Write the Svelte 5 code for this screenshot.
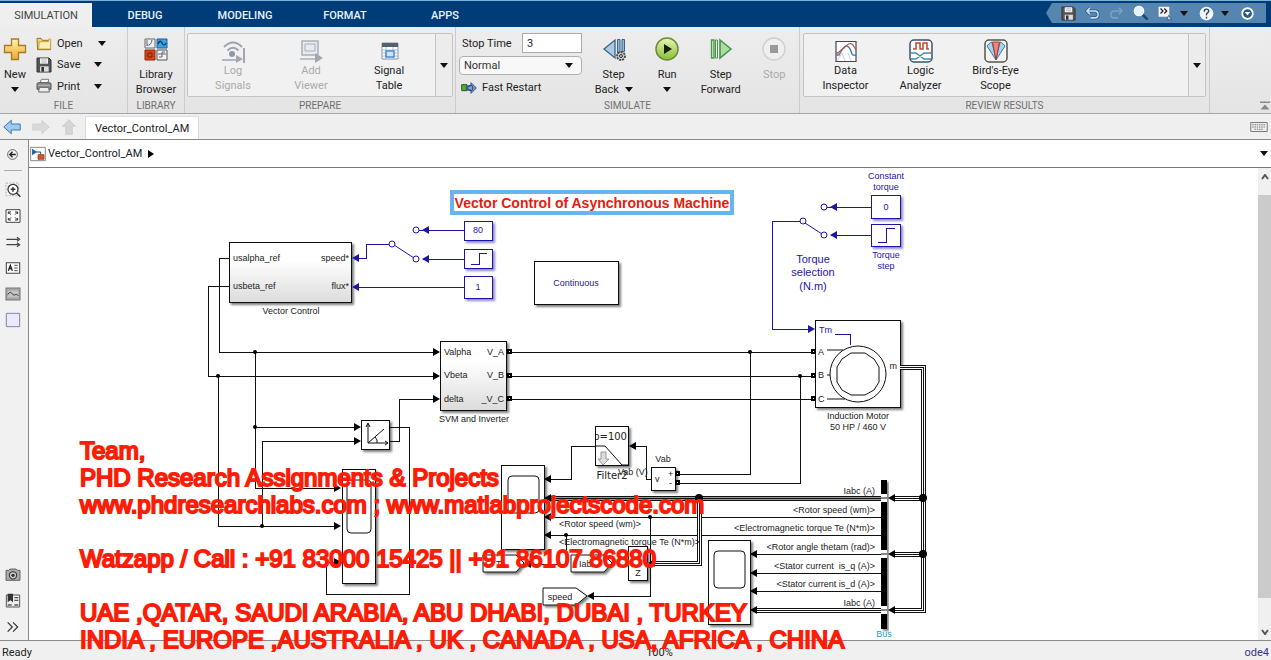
<script>
  const tabs = ['SIMULATION', 'DEBUG', 'MODELING', 'FORMAT', 'APPS'];
  let active = $state('SIMULATION');

  const fileActions = [
    { icon: 'open', label: 'Open' },
    { icon: 'save', label: 'Save' },
    { icon: 'print', label: 'Print' }
  ];
  const prepare = [
    { icon: 'log', lines: ['Log', 'Signals'], off: true },
    { icon: 'viewer', lines: ['Add', 'Viewer'], off: true },
    { icon: 'table', lines: ['Signal', 'Table'] }
  ];
  const review = [
    { icon: 'inspector', lines: ['Data', 'Inspector'] },
    { icon: 'logic', lines: ['Logic', 'Analyzer'] },
    { icon: 'scope', lines: ["Bird's-Eye", 'Scope'] }
  ];
  const paletteTop = ['zoom', 'fit', 'arrows', 'note', 'image', 'area'];
  const paletteBottom = ['camera', 'book', 'more'];

  const wires = [
    'M229 258H219V352H434', 'M229 286H208V376H434',
    'M255 352V488H336', 'M255 427H356', 'M262 526V441H356', 'M218 376V526H336',
    'M390 427H409V594H326V562H336', 'M390 441H399V399H434',
    'M511 352H811', 'M511 376H811', 'M511 399H811',
    'M750 352V474H679', 'M800 376V483H679',
    'M595 446H571V479H551', 'M651 479H646V446H635',
    'M881 517H551', 'M881 535H551', 'M650 517V596H594', 'M566 535V564H530',
    'M881 554H757', 'M881 573H757', 'M881 591H757'
  ];
  const blueWires = [
    'M464 230H423', 'M464 259H423', 'M464 287H359', 'M389 244H366V258H359',
    'M871 207H831', 'M871 235H831', 'M800 221H772V329H809', 'M419 230H423', 'M827 207H831'
  ];
  const buses = ['M900 367H923V610H895', 'M923 498H895', 'M923 554H895', 'M881 498H551', 'M699 498V563H653', 'M881 610H757'];
  const dots = [
    [255, 352, 2], [218, 376, 2], [255, 427, 2], [262, 526, 2], [750, 352, 2], [800, 376, 2],
    [650, 517, 2], [566, 535, 2], [923, 498, 4], [923, 554, 4], [699, 498, 4]
  ];
  const heads = [
    [440, 352, 1], [440, 376, 1], [440, 399, 1], [361, 427, 1], [361, 441, 1], [341, 488, 1], [341, 526, 1], [341, 562, 1],
    [544, 479, -1], [544, 498, -1], [544, 517, -1], [544, 535, -1], [629, 446, -1], [587, 596, -1], [524, 564, -1],
    [750, 554, -1], [750, 573, -1], [750, 591, -1], [750, 610, -1], [888, 498, -1], [888, 554, -1], [888, 610, -1], [648, 563, -1]
  ];
  const blueHeads = [[422, 230, -1], [422, 259, -1], [352, 258, -1], [352, 287, -1], [830, 207, -1], [830, 235, -1], [815, 329, 1]];
  const ports = [[508, 352], [508, 376], [508, 399], [812, 352], [812, 376], [812, 399], [676, 474], [676, 483]];
  const blueRings = [[416, 230], [416, 259], [392, 244], [824, 207], [824, 235], [803, 221]];
  const blocks = [
    [229, 242, 122, 60, 'g'], [440, 341, 66, 69, 'g'], [534, 261, 84, 43, ''], [815, 320, 85, 87, ''],
    [361, 420, 28, 29, ''], [342, 469, 33, 114, ''], [501, 465, 43, 84, ''], [708, 540, 42, 84, ''],
    [595, 426, 33, 39, ''], [651, 467, 24, 23, ''], [628, 546, 19, 34, '']
  ];
  const blueBlocks = [[464, 221, 28, 19], [464, 249, 28, 19], [464, 276, 28, 22], [871, 195, 29, 23], [871, 224, 29, 22]];
  const gotos = ['M483 555H516L524 563L516 572H483Z', 'M571 555H604L612 563L604 572H571Z', 'M543 588H576L587 596L576 605H543Z'];
  const names = [
    [291, 314, 'Vector Control'], [474, 422, 'SVM and Inverter'], [858, 419, 'Induction Motor'],
    [858, 430, '50 HP / 460 V'], [663, 462, 'Vab'], [560, 600, 'speed'], [638, 576, 'Z']
  ];
  const labels = [
    [233, 261, 'usalpha_ref'], [233, 289, 'usbeta_ref'], [349, 261, 'speed*', 'end'], [349, 289, 'flux*', 'end'],
    [444, 355, 'Valpha'], [444, 378, 'Vbeta'], [444, 402, 'delta'],
    [504, 355, 'V_A', 'end'], [504, 378, 'V_B', 'end'], [504, 402, '_V_C', 'end'],
    [818, 355, 'A'], [818, 378, 'B'], [818, 402, 'C'], [897, 369, 'm', 'end'],
    [618, 475, 'Vab (V)'], [655, 482, 'v'], [668, 477, '+'], [669, 486, '-'],
    [559, 527, '<Rotor speed (wm)>'], [559, 545, '<Electromagnetic torque Te (N*m)>'],
    [496, 567, 'Te'], [579, 567, 'Iab'],
    [875, 494, 'Iabc (A)', 'end'], [875, 513, '<Rotor speed (wm)>', 'end'],
    [875, 531, '<Electromagnetic torque Te (N*m)>', 'end'], [875, 550, '<Rotor angle thetam (rad)>', 'end'],
    [875, 569, '<Stator current  is_q (A)>', 'end'], [875, 587, '<Stator current is_d (A)>', 'end'], [875, 606, 'Iabc (A)', 'end']
  ];
  const blueLabels = [
    [478, 233, '80'], [478, 290, '1'], [576, 286, 'Continuous'], [886, 179, 'Constant'], [886, 190, 'torque'],
    [886, 210, '0'], [886, 258, 'Torque'], [886, 269, 'step']
  ];
  const contact = [
    'Team,', 'PHD Research Assignments & Projects', 'www.phdresearchlabs.com ; www.matlabprojectscode.com', '',
    'Watzapp / Call : +91 83000 15425 || +91 86107 86880', '',
    'UAE ,QATAR, SAUDI ARABIA, ABU DHABI, DUBAI , TURKEY', 'INDIA , EUROPE ,AUSTRALIA , UK , CANADA , USA, AFRICA , CHINA'
  ];
</script>

{#snippet caret()}
  <svg class="caret" width="8" height="5" viewBox="0 0 8 5" aria-hidden="true"><path d="M0 0H8L4 5Z" fill="currentColor" /></svg>
{/snippet}

{#snippet glyph(name, size)}
  <svg width={size} height={size} viewBox="0 0 24 24" fill="none" aria-hidden="true">
    {#if name === 'new'}
      <path d="M8.500 2h7v6.500h7v7h-7v7h-7v-7h-7v-7h7z" fill="url(#gold)" stroke="#a87a2c" stroke-width="1.300" />
    {:else if name === 'open'}
      <path d="M1.500 3.500h6l2 3h12v14h-19z" fill="#f4d26a" stroke="#9a7420" stroke-width="1.500" />
      <path d="M5 8.500h14v-4h3v15H4z" fill="#fdf0b4" stroke="#b28b34" />
    {:else if name === 'save'}
      <path d="M1.500 1.500h18l3 3v18h-21z" fill="#555" stroke="#333" stroke-width="1.500" />
      <path d="M6 2h12v8H6z" fill="#f4f4f4" /><path d="M6 14h13v8H6z" fill="#ddd" /><path d="M8 15h4v7H8z" fill="#333" />
      <path d="M8 4.500h8M8 7.500h8" stroke="#999" />
    {:else if name === 'print'}
      <path d="M6 8l2-6h11l-1 6" fill="#fff" stroke="#777" stroke-width="1.500" />
      <path d="M1.500 9q0-2 3-2h15q3 0 3 2v8h-21z" fill="#8b8e92" stroke="#555" stroke-width="1.500" />
      <path d="M5 14h14l1 7H4z" fill="#eee" stroke="#666" stroke-width="1.500" /><path d="M3 11h18" stroke="#ccc" />
    {:else if name === 'library'}
      <path d="M1 2h10v9H1z" fill="#eee" stroke="#667" /><path d="M3 9V3M3 8q4 1 5-5" stroke="#667" />
      <path d="M13 2h10v9H13z" fill="#3aa5e6" stroke="#1a5f90" /><path d="M14 7q2-5 4-1t4 0" stroke="#0b3c66" stroke-width="1.500" />
      <path d="M1 13h10v10H1z" fill="#d8441c" stroke="#8c2508" /><path d="M4 20v-4h4v4z" stroke="#7b1d00" />
      <path d="M13 13h10v10H13z" fill="#f4f4f4" stroke="#555" /><path d="M15 20h3v-5h3M14 17h8" stroke="#666" />
    {:else if name === 'log'}
      <path d="M3 8q9-9 18 0M6.500 11.500q5.500-5.500 11 0" stroke="#9aa3b0" stroke-width="2" />
      <circle cx="11" cy="15" r="3" fill="#8f98a6" /><path d="M1 21h15" stroke="#9aa3b0" stroke-width="1.500" />
      <path d="M15 16l7 4-7 4zM22 9h2v15h-2z" fill="#a3a7ad" />
    {:else if name === 'viewer'}
      <path d="M3 2h16v14H3z" fill="#e6e9ee" stroke="#a9b0ba" stroke-width="1.500" /><path d="M6 5h10v7H6z" stroke="#a9b0ba" />
      <path d="M1 20h16" stroke="#a9b0ba" stroke-width="1.500" /><path d="M16 14l8 5-8 5z" fill="#a3a7ad" />
    {:else if name === 'table'}
      <path d="M5 4h16v16H5z" fill="#fff" stroke="#8a94a3" /><path d="M5 4h16v4H5z" fill="#55606e" />
      <path d="M5 11h16M5 14h16M5 17h16M9 8v12M16 8v12" stroke="#9ec0e8" />
      <path d="M9 12h8v6H9z" fill="#cfe3fa" stroke="#4c8ad0" stroke-width="1.500" />
    {:else if name === 'back'}
      <path d="M13 3v18L2 12z" fill="#a9cbe9" stroke="#41617f" stroke-width="1.300" />
      <path d="M15.500 2.500h2.500v17h-2.500zM20 2.500h2.500v12H20z" fill="#8fb9df" stroke="#41617f" />
      <circle cx="19" cy="19" r="4" fill="#ccc" stroke="#444" stroke-width="1.800" stroke-dasharray="2 1" /><circle cx="19" cy="19" r="1.500" stroke="#333" />
    {:else if name === 'run'}
      <circle cx="12" cy="12" r="11" fill="url(#lime)" stroke="#6d8a3a" stroke-width="1.500" /><path d="M9 7l8 5-8 5z" fill="#152008" />
    {:else if name === 'forward'}
      <path d="M2.500 3h2.500v18H2.500z" fill="#c8ecc4" stroke="#4f9150" stroke-width="1.300" /><path d="M6.500 3h2v18h-2z" fill="#e4f5e1" stroke="#4f9150" />
      <path d="M11 3l11 9-11 9z" fill="#a9e0a2" stroke="#4f9150" stroke-width="1.600" />
    {:else if name === 'stop'}
      <circle cx="12" cy="12" r="11" fill="#efefef" stroke="#cfcfcf" stroke-width="1.300" /><path d="M8 8h8v8H8z" fill="#999" />
    {:else if name === 'inspector'}
      <path d="M2 2.500h20v20H2z" fill="#fff" stroke="#445" stroke-width="1.200" />
      <path d="M2 16h3q5-10 8-9t5 8q1 2 4 1" stroke="#3b82b8" stroke-width="1.500" /><path d="M2 14h2q4-4 6-5 6-7 9-3l3 5" stroke="#c2523d" stroke-width="1.300" />
      <path d="M3 22l5-8 3 8M14 14l3 8" stroke="#cdd3da" />
    {:else if name === 'logic'}
      <rect x="1" y="1" width="22" height="22" rx="4" fill="#fff" stroke="#3f5068" stroke-width="1.500" />
      <path d="M4 10h3V4h4v6h3V4h4v6h2" stroke="#c0452b" stroke-width="1.500" />
      <path d="M2 14h5l8 6h7M2 20h5l8-6h7" stroke="#3f8fae" stroke-width="1.500" />
    {:else if name === 'scope'}
      <rect x="1" y="1" width="22" height="22" rx="4" fill="#f4f4f4" stroke="#554" stroke-width="1.500" />
      <path d="M12 21L3 7q2-3 5-4z" fill="#a5d3f4" stroke="#3978a4" /><path d="M12 21l9-14q-2-3-5-4z" fill="#a5d3f4" stroke="#3978a4" />
      <path d="M12 21L8.500 3h7z" fill="#ee8473" stroke="#a3402f" />
    {:else if name === 'zoom'}
      <path d="M1.500 1.500h19v19h-19z" stroke="#999" stroke-dasharray="3 2" /><circle cx="12" cy="11" r="7.500" fill="#fff" stroke="#333" stroke-width="1.800" />
      <path d="M12 7.500v7M8.500 11h7M17 16l6 6" stroke="#333" stroke-width="2.200" />
    {:else if name === 'fit'}
      <path d="M1.500 2.500h21v19h-21z" fill="#fff" stroke="#444" stroke-width="1.500" />
      <path d="M5 9V6h4M5 6l4 4M19 9V6h-4M19 6l-4 4M5 15v3h4M5 18l4-4M19 15v3h-4M19 18l-4-4" stroke="#333" stroke-width="1.500" />
    {:else if name === 'arrows'}
      <path d="M2 8h18M2 16h18M18 5l4 3-4 3M18 13l4 3-4 3" stroke="#444" stroke-width="1.800" />
    {:else if name === 'note'}
      <path d="M2 4h20v16H2z" fill="#fff" stroke="#444" stroke-width="1.600" /><path d="M5 16l3-8 3 8M6 13h4" stroke="#222" stroke-width="2" />
      <path d="M14 8h5M14 12h5M14 16h5" stroke="#444" stroke-width="1.500" />
    {:else if name === 'image'}
      <path d="M1.500 3h21v18h-21z" fill="#a8a8a8" stroke="#777" stroke-width="1.600" /><path d="M4 7h16v10H4z" fill="#c4c4c4" /><path d="M4 13q4-7 8 0 2 2 3 0 3-2 5 2" stroke="#444" stroke-width="1.500" />
    {:else if name === 'area'}
      <path d="M2 2h20v20H2z" fill="#e9e9fb" stroke="#8585a5" stroke-width="1.500" />
    {:else if name === 'camera'}
      <path d="M1.500 5h4l2-2h9l2 2h4v15h-21z" fill="#aaa" stroke="#555" stroke-width="1.300" /><circle cx="12" cy="12.500" r="5.500" fill="#ccc" stroke="#333" stroke-width="1.600" /><circle cx="12" cy="12.500" r="2.500" fill="#333" />
    {:else if name === 'book'}
      <path d="M2 3h20v18H2z" fill="#eee" stroke="#555" stroke-width="1.500" /><path d="M4 1h8v13l-4-3-4 3z" fill="#333" />
      <path d="M14 7h6M14 11h6M4 18h6M14 18h6" stroke="#555" stroke-width="2" />
    {:else if name === 'more'}
      <path d="M4 5l7 7-7 7M12 5l7 7-7 7" stroke="#333" stroke-width="1.800" />
    {:else if name === 'prev'}
      <circle cx="12" cy="12" r="9" stroke="#555" stroke-width="1.600" /><path d="M18 12H8M12 7l-5 5 5 5" stroke="#222" stroke-width="2.500" />
    {:else if name === 'model'}
      <path d="M1 2h22v20H1z" fill="#fff" stroke="#777" stroke-width="1.300" /><path d="M3 4l8 5-8 5z" fill="#1b6f9e" /><path d="M10 9h6v4" stroke="#444" stroke-width="1.500" />
      <path d="M12 13h9v7h-9z" fill="#d4532d" stroke="#8c2c10" />
    {:else if name === 'restart'}
      <path d="M1 7h8v9H1z" fill="#57a845" stroke="#25601a" stroke-width="1.500" /><path d="M8 9h7V4l8 8-8 8v-5H8z" fill="#7fa4d6" stroke="#2f4f86" stroke-width="1.500" /><circle cx="14" cy="12" r="4" stroke="#2b3f5f" stroke-width="1.500" />
    {:else if name === 'left'}
      <path d="M1 12l10-9v5h12v8H11v5z" fill="#9dcaee" stroke="#3a78ab" stroke-width="1.300" />
    {:else if name === 'right'}
      <path d="M23 12L13 3v5H1v8h12v5z" fill="#dadada" stroke="#cbcbcb" />
    {:else if name === 'up'}
      <path d="M12 1l10 10h-5v12H7V11H2z" fill="#d6d6d6" stroke="#c6c6c6" />
    {:else if name === 'undo'}
      <path d="M8 3L3 8l5 5M4 8h11q6 0 6 5.500T15 19H9" stroke="#2f5a88" stroke-width="5" /><path d="M8 3L3 8l5 5M4 8h11q6 0 6 5.500T15 19H9" stroke="#c4e0f8" stroke-width="2.500" />
    {:else if name === 'redo'}
      <path d="M16 3l5 5-5 5M20 8H9q-6 0-6 5.500T9 19h5" stroke="#7ca1c5" stroke-width="2.500" />
    {:else if name === 'search'}
      <path d="M14 14l8 8" stroke="#24466c" stroke-width="4" /><circle cx="9" cy="9" r="7" fill="#e4f2fd" stroke="#fff" stroke-width="2" />
    {:else if name === 'links'}
      <path d="M1 1h17v16H1z" fill="#f5f5f5" /><path d="M4 4l4 4-4 4M10 4l4 4-4 4" stroke="#222" stroke-width="2" /><path d="M14 22l3-7 5 7z" fill="#cfe0f0" stroke="#365f88" stroke-width="1.500" />
    {:else if name === 'help'}
      <circle cx="12" cy="12" r="11" fill="#f3f7fb" /><path d="M8.500 9q0-4 3.500-4t3.500 3q0 2-2 3t-1.500 4M12 17v3" stroke="#23476e" stroke-width="2.300" />
    {:else if name === 'options'}
      <circle cx="12" cy="12" r="8.500" fill="#20588c" stroke="#fff" stroke-width="3" /><path d="M7.500 9.500h9L12 15z" fill="#fff" />
    {:else if name === 'keys'}
      <path d="M1 6h22v12H1z" fill="#eee" stroke="#777" stroke-width="1.300" /><path d="M3 9h18M3 12h18M6 15h12" stroke="#777" stroke-width="1.500" stroke-dasharray="2 1" />
    {:else if name === 'collapse'}
      <path d="M2 5h20v3H2zM12 11l9 10H3z" fill="#888" />
    {/if}
  </svg>
{/snippet}

{#snippet galleryButton(b)}
  <button class="tool" disabled={b.off}>
    {@render glyph(b.icon, 24)}
    <span>{b.lines[0]}<br />{b.lines[1]}</span>
  </button>
{/snippet}

{#snippet shape(list)}
  {#each list as [x, y, d]}
    <path d={`M${x} ${y}L${x - 7 * d} ${y - 4}V${y + 4}Z`} />
  {/each}
{/snippet}

<div class="app">
  <svg class="defs" width="0" height="0" aria-hidden="true">
    <defs>
      <linearGradient id="gold" x1="0" y1="0" x2="0" y2="1"><stop offset="0" stop-color="#fff3a8" /><stop offset="1" stop-color="#eda92c" /></linearGradient>
      <linearGradient id="lime" x1="0" y1="0" x2="0" y2="1"><stop offset="0" stop-color="#e9f7b5" /><stop offset="1" stop-color="#86bd32" /></linearGradient>
    </defs>
  </svg>

  <header class="menu">
    <nav>
      {#each tabs as t}
        <button class:active={active === t} onclick={() => (active = t)}>{t}</button>
      {/each}
    </nav>
    <div class="quick">
      <button aria-label="Save">{@render glyph('save', 15)}</button>
      <button aria-label="Undo">{@render glyph('undo', 15)}</button>
      <button aria-label="Redo">{@render glyph('redo', 15)}</button>
      <button aria-label="Find">{@render glyph('search', 16)}</button>
      <button class="pair" aria-label="Shortcuts">{@render glyph('links', 15)}{@render caret()}</button>
      <button class="pair" aria-label="Help">{@render glyph('help', 15)}{@render caret()}</button>
      <button aria-label="Options">{@render glyph('options', 15)}</button>
    </div>
  </header>

  <div class="strip">
    <section class="file">
      <div class="body">
        <button class="new">{@render glyph('new', 24)}<span>New</span>{@render caret()}</button>
        <div class="stack">
          {#each fileActions as a}
            <button class="row">{@render glyph(a.icon, 16)}<span>{a.label}</span>{@render caret()}</button>
          {/each}
        </div>
      </div>
      <h2>FILE</h2>
    </section>
    <section class="library">
      <div class="body center">
        <button class="big">{@render glyph('library', 24)}<span>Library<br />Browser</span></button>
      </div>
      <h2>LIBRARY</h2>
    </section>
    <section class="prepare">
      <div class="gallery">
        <div class="items">{#each prepare as b}{@render galleryButton(b)}{/each}</div>
        <button class="expand" aria-label="More prepare tools">{@render caret()}</button>
      </div>
      <h2>PREPARE</h2>
    </section>
    <section class="simulate">
      <div class="body">
        <div class="form">
          <div class="time"><label for="stop">Stop Time</label><input id="stop" value="3" /></div>
          <div class="mode">
            <select aria-label="Simulation mode"><option>Normal</option></select>
            {@render caret()}
          </div>
          <button class="row fast">{@render glyph('restart', 16)}<span>Fast Restart</span></button>
        </div>
        <button class="big">{@render glyph('back', 24)}<span>Step<br />Back <i>{@render caret()}</i></span></button>
        <button class="big run">{@render glyph('run', 24)}<span>Run<br />{@render caret()}</span></button>
        <button class="big">{@render glyph('forward', 24)}<span>Step<br />Forward</span></button>
        <button class="big run" disabled>{@render glyph('stop', 24)}<span>Stop</span></button>
      </div>
      <h2>SIMULATE</h2>
    </section>
    <section class="review">
      <div class="gallery">
        <div class="items">{#each review as b}{@render galleryButton(b)}{/each}</div>
        <button class="expand" aria-label="More review tools">{@render caret()}</button>
      </div>
      <h2>REVIEW RESULTS</h2>
    </section>
    <button class="collapse" aria-label="Collapse toolstrip">{@render glyph('collapse', 12)}</button>
  </div>

  <div class="docs">
    <div class="nav">
      <button aria-label="Back">{@render glyph('left', 18)}</button>
      <button aria-label="Forward" disabled>{@render glyph('right', 18)}</button>
      <button aria-label="Up" disabled>{@render glyph('up', 16)}</button>
    </div>
    <button class="doc">Vector_Control_AM</button>
    <button class="keys" aria-label="Keyboard shortcuts">{@render glyph('keys', 18)}</button>
  </div>

  <div class="work">
    <aside>
      <button class="first" aria-label="Hide browser">{@render glyph('prev', 13)}</button>
      <hr />
      {#each paletteTop as p}<button aria-label={p}>{@render glyph(p, 16)}</button>{/each}
      <div class="grow"></div>
      {#each paletteBottom as p}<button aria-label={p}>{@render glyph(p, 16)}</button>{/each}
    </aside>
    <main>
      <div class="crumbs">
        {@render glyph('model', 16)}<span>Vector_Control_AM</span>
        <svg width="6" height="8" viewBox="0 0 6 8" aria-hidden="true"><path d="M0 0L6 4L0 8Z" /></svg>
        <button aria-label="Breadcrumb history">{@render caret()}</button>
      </div>
      <div class="view">
        <div class="canvas">
          <svg class="model" width="1229" height="471" viewBox="29 168 1229 471" role="img" aria-label="Vector control block diagram">
            <defs>
              <linearGradient id="steel" x1="0" y1="0" x2="0" y2="1"><stop offset="0.300" stop-color="#fff" /><stop offset="1" stop-color="#dcdcdc" /></linearGradient>
              <filter id="shade" x="-20%" y="-20%" width="150%" height="150%"><feDropShadow dx="2" dy="2" stdDeviation="1" flood-color="#000" flood-opacity="0.500" /></filter>
              <filter id="blueshade" x="-20%" y="-20%" width="150%" height="150%"><feDropShadow dx="2" dy="2" stdDeviation="1" flood-color="#1c1291" flood-opacity="0.500" /></filter>
              <clipPath id="filterbox"><path d="M596 427H628V465H596Z" /></clipPath>
            </defs>

            <g class="ink crisp">
              {#each blocks as [x, y, w, h, g]}
                <rect {x} {y} width={w} height={h} fill={g ? 'url(#steel)' : '#fff'} filter="url(#shade)" />
              {/each}
              {#each wires as d}<path {d} fill="none" />{/each}
            </g>
            <g class="ink">{#each gotos as d}<path {d} fill="#fff" filter="url(#shade)" />{/each}</g>
            <g class="blue crisp">
              {#each blueBlocks as [x, y, w, h]}<rect {x} {y} width={w} height={h} fill="#fff" filter="url(#blueshade)" />{/each}
              {#each blueWires as d}<path {d} fill="none" />{/each}
              <path d="M471 264H479V253H487M878 242H886V228H895M835 334H850V345" fill="none" />
            </g>
            <g class="blue">
              <path d="M394 245L414 258M805 223L822 234" />
              {#each blueRings as [cx, cy]}<circle {cx} {cy} r="3" fill="#fff" />{/each}
            </g>
            <g fill="none" class="crisp">
              {#each buses as d, i}
                <path {d} stroke="#111" stroke-width="5" /><path {d} stroke={i === 3 ? '#999' : '#fff'} stroke-width="3" /><path {d} stroke="#111" stroke-width="1" />
              {/each}
            </g>
            <path d="M881 480H887V629H881Z" fill="#000" filter="url(#shade)" />
            <path d="M881 494H887V502H881ZM881 550H887V558H881ZM881 606H887V614H881Z" fill="#fff" />
            <path class="ink" d="M881 498H887M881 554H887M881 610H887" />
            <g fill="#000">
              {@render shape(heads)}
              {#each dots as [cx, cy, r]}<circle {cx} {cy} {r} />{/each}
              {#each ports as [x, y]}<path d={`M${x - 1} ${y - 3}h5v5h-5z`} /><path d={`M${x + 1} ${y - 1}h1v1h-1z`} fill="#fff" />{/each}
            </g>
            <g fill="#1f14a8">{@render shape(blueHeads)}</g>

            <g class="ink" fill="none">
              <circle cx="858" cy="374" r="28" />
              <path d="M851 353H865L874 359L879 367V382L874 390L865 395H851L842 390L837 382V367L842 359Z" />
              <path d="M827 350H843M827 375H830M827 399H845" />
              <rect x="347" y="480" width="24" height="53" rx="4" />
              <rect x="508" y="476" width="31" height="37" rx="4" />
              <rect x="714" y="551" width="31" height="37" rx="4" />
              <path d="M368 424V443H388M366 427L368 423L370 427M385 441L388 443L385 445M368 443L384 429M375 437Q378 440 377 443" />
              <path d="M595 446H605L622 465H628" />
            </g>
            <path d="M601 452H606V459H609L603 465L598 459H601Z" fill="#ddd" stroke="#999" />
            <g clip-path="url(#filterbox)"><text class="mono" x="627" y="440" text-anchor="end">p=100</text></g>
            <text class="mono" x="612" y="479" text-anchor="middle">Filter2</text>
            <g class="small">{#each names as [x, y, t]}<text {x} {y} text-anchor="middle">{t}</text>{/each}</g>
            <g class="small">{#each labels as [x, y, t, a]}<text {x} {y} text-anchor={a ?? 'start'}>{t}</text>{/each}</g>
            <g class="small indigo">{#each blueLabels as [x, y, t]}<text {x} {y} text-anchor="middle">{t}</text>{/each}<text x="819" y="333">Tm</text></g>
            <g class="medium"><text x="813" y="263">Torque</text><text x="813" y="276">selection</text><text x="813" y="290">(N.m)</text></g>
            <text class="small sky" x="884" y="637" text-anchor="middle">Bus</text>
            <rect x="452" y="192" width="280" height="21" fill="#fff" stroke="#68b4ee" stroke-width="4" />
            <text class="title" x="592" y="208">Vector Control of Asynchronous Machine</text>
          </svg>
        </div>
        <div class="scroll">
          <svg width="8" height="6" viewBox="0 0 8 6" fill="none"><path d="M1 5L4 1L7 5" stroke="#555" stroke-width="2" /></svg>
          <div class="thumb"></div>
          <svg width="8" height="6" viewBox="0 0 8 6" fill="none"><path d="M1 1L4 5L7 1" stroke="#555" stroke-width="2" /></svg>
        </div>
      </div>
    </main>
  </div>

  <footer><span>Ready</span><span class="zoomed">100%</span><span class="solver">ode4</span></footer>

  <div class="contact">
    {#each contact as line}<p>{line}</p>{/each}
  </div>
</div>

<style>
  :global(body) { background: #f0f0f0; }
  .app { position: relative; display: flex; flex-direction: column; min-height: 100vh; font: 11px/15px Roboto, "Open Sans", sans-serif; color: #222; overflow: hidden; }
  .defs { position: absolute; }
  button { border: 0; padding: 0; margin: 0; background: none; font: inherit; color: inherit; display: flex; align-items: center; justify-content: center; }
  svg { flex: none; display: block; }
  .caret { color: #111; }

  .menu { display: flex; justify-content: space-between; height: 24px; padding-top: 2px; border-top: 1px solid #7fb2d8; background: #003c77; }
  nav { display: flex; }
  nav button { width: 100px; color: #e8f2fb; font-weight: 500; }
  nav button.active { width: 92px; margin-right: 3px; background: #efefef; color: #444; font-weight: 400; }
  .quick { display: flex; align-items: center; gap: 9px; height: 20px; margin-right: 5px; padding: 0 11px 0 15px; background: #5685b0; clip-path: polygon(6px 0, 100% 0, 100% 100%, 6px 100%, 0 50%); }
  .quick .pair { gap: 7px; }
  .quick .pair + .pair { margin-left: 2px; }
  .quick .pair + button:last-child { margin-left: 2px; }

  .strip { display: flex; height: 86px; border-bottom: 1px solid #a6a6a6; background: linear-gradient(#ededed, #e4e4e4); }
  section { display: flex; flex-direction: column; box-sizing: border-box; padding-top: 6px; border-right: 1px solid #ccc; }
  section h2 { margin: auto 0 0; font-size: 10px; line-height: 14px; font-weight: 400; text-align: center; color: #707070; }
  .body { display: flex; height: 64px; }
  .center { justify-content: center; }
  .file { width: 128px; }
  .library { width: 57px; }
  .prepare { width: 271px; padding-left: 2px; padding-right: 2px; }
  .simulate { width: 344px; }
  .review { width: 410px; padding-left: 3px; padding-right: 3px; }
  .new { flex-direction: column; width: 30px; justify-content: flex-start; padding-top: 4px; }
  .new span { margin: 6px 0 5px; }
  .stack { display: flex; flex-direction: column; padding-left: 6px; }
  .row { height: 22px; gap: 5px; justify-content: flex-start; }
  .stack .row { width: 66px; }
  .stack .row:first-child { width: 70px; }
  .row .caret { margin-left: auto; }
  .big { flex-direction: column; justify-content: flex-start; width: 58px; padding-top: 4px; }
  .big span { margin-top: 6px; white-space: nowrap; }
  .big .caret, .tool .caret { display: inline-block; vertical-align: 1px; }
  .big i { padding-left: 3px; }
  .big.run { width: 50px; }
  .big:disabled, .tool:disabled { color: #aaa; }
  .gallery { display: flex; height: 62px; border: 1px solid #c4c4c4; border-radius: 2px; background: #f1f1f1; }
  .items { display: flex; flex: 1; padding-left: 6px; }
  .tool { flex-direction: column; justify-content: flex-start; width: 78px; padding-top: 5px; }
  .review .items { padding-left: 4px; }
  .review .tool { width: 75px; }
  .expand { width: 17px; border-left: 1px solid #c4c4c4; background: #ececec; }
  .form { width: 124px; margin: 0 3px; display: flex; flex-direction: column; gap: 3px; }
  .time { display: flex; align-items: center; justify-content: space-between; padding-left: 3px; }
  input { width: 60px; height: 20px; box-sizing: border-box; border: 1px solid #aaa; padding: 0 4px; font: inherit; color: #222; background: #fff; }
  .mode { display: flex; align-items: center; height: 20px; box-sizing: border-box; border: 1px solid #b0b0b0; border-radius: 4px; background: #f8f8f8; padding-right: 8px; }
  select { flex: 1; appearance: none; border: 0; background: none; font: inherit; color: #333; padding: 0 4px; }
  .fast { height: 20px; padding-left: 2px; }
  .collapse { margin-left: auto; align-self: flex-end; width: 13px; height: 16px; }

  .docs { display: flex; align-items: flex-end; height: 25px; border-bottom: 1px solid #8a8a8a; background: #efefef; }
  .nav { display: flex; align-items: center; gap: 11px; width: 82px; height: 25px; padding-left: 3px; }
  .doc { height: 23px; padding: 0 9px; background: #fff; border: 1px solid #ddd; border-bottom: 0; color: #222; }
  .keys { margin-left: auto; height: 24px; padding-right: 3px; }

  .work { flex: 1; display: flex; }
  aside { display: flex; flex-direction: column; width: 28px; border-right: 1px solid #8a8a8a; background: #f0f1f0; }
  aside button { height: 26px; padding-right: 3px; }
  aside .first { height: 28px; }
  hr { width: 18px; margin: 2px 0 6px 4px; border: 0; border-top: 1px solid #aaa; }
  .grow { flex: 1; }
  main { flex: 1; min-width: 0; display: flex; flex-direction: column; }
  .crumbs { display: flex; align-items: center; gap: 2px; height: 27px; padding: 0 3px 0 1px; border-bottom: 1px solid #777; background: #fff; }
  .crumbs > svg:nth-of-type(2) { margin-left: 4px; }
  .crumbs button { margin-left: auto; height: 24px; }
  .view { flex: 1; display: flex; background: #fff; }
  .canvas { flex: 1; min-width: 0; overflow: hidden; }
  .scroll { display: flex; flex-direction: column; align-items: center; width: 13px; padding: 6px 0 5px; background: #f0f0f0; }
  .thumb { width: 13px; flex: 1; margin: 15px 0 31px; background: #cbcbcb; }
  footer { display: grid; grid-template-columns: 1fr auto 1fr; align-items: center; height: 20px; padding: 4px 2px 0; box-sizing: border-box; border-top: 1px solid #8a8a8a; background: #f0f0f0; }
  .zoomed { padding-left: 48px; }
  .solver { text-align: right; color: #35358c; }

  .crisp { shape-rendering: crispEdges; }
  .ink { stroke: #111; }
  .blue { stroke: #1f14a8; }
  text { fill: #222; font-family: "Liberation Sans", Arial, sans-serif; white-space: pre; }
  .small text, text.small { font-size: 9px; }
  .indigo text { fill: #1f14a8; }
  .medium text { font-size: 11px; fill: #1f14a8; text-anchor: middle; }
  text.sky { fill: #2e94cf; }
  text.mono { font-family: "DejaVu Sans", sans-serif; font-size: 10px; }
  text.title { font-size: 14px; font-weight: 700; fill: #e2200f; text-anchor: middle; }

  .contact { position: absolute; left: 80px; top: 437px; font: 24px/27px "Liberation Sans", Arial, sans-serif; color: #fb1d08; -webkit-text-stroke: 2px #fb1d08; white-space: nowrap; pointer-events: none; }
  .contact p { margin: 0; min-height: 27px; }
</style>
